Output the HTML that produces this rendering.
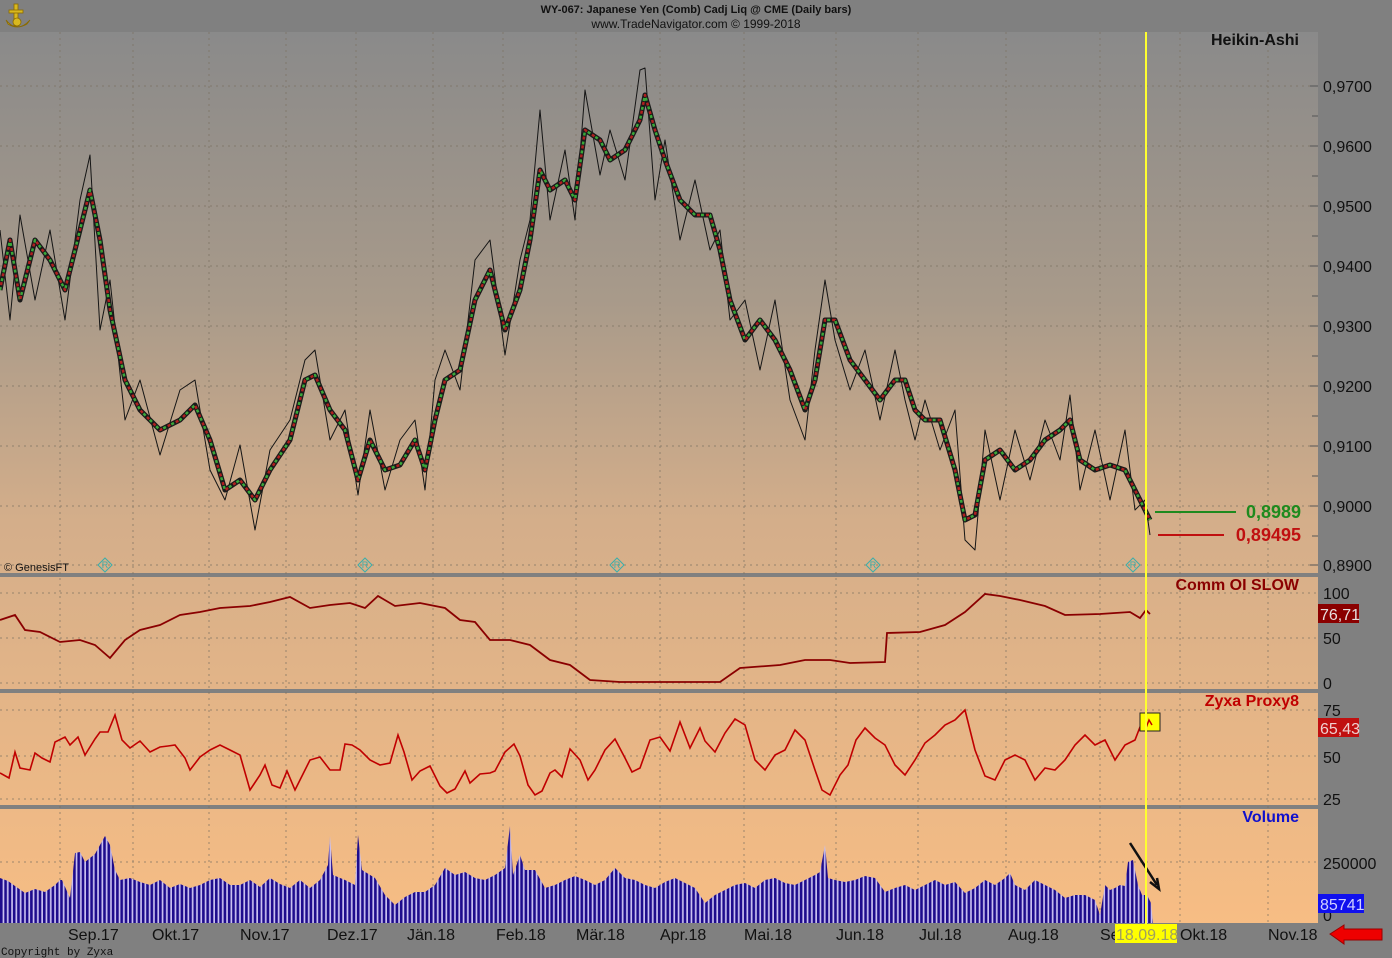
<!DOCTYPE html>
<html><head><meta charset="utf-8">
<style>
html,body{margin:0;padding:0;background:#808080;}
body{width:1392px;height:958px;overflow:hidden;position:relative;font-family:"Liberation Sans",sans-serif;}
svg{position:absolute;left:0;top:0;}
</style></head><body>
<svg width="1392" height="958" viewBox="0 0 1392 958" xmlns="http://www.w3.org/2000/svg" font-family="Liberation Sans, sans-serif">
<defs>
<linearGradient id="bg" x1="0" y1="0" x2="0" y2="1">
<stop offset="0" stop-color="#8a8a8a"/>
<stop offset="0.3" stop-color="#a89a8a"/>
<stop offset="0.55" stop-color="#d4ae8a"/>
<stop offset="1" stop-color="#f7bd84"/>
</linearGradient>
<pattern id="vol" x="0" y="0" width="4.3" height="10" patternUnits="userSpaceOnUse">
<rect x="0" y="0" width="4.3" height="10" fill="#c9bff0"/>
<rect x="0" y="0" width="2.6" height="10" fill="#1e0c8c"/>
</pattern>
</defs>
<rect x="0" y="0" width="1392" height="958" fill="#808080"/>
<rect x="0" y="32" width="1318" height="891" fill="url(#bg)"/>
<!-- header -->
<text x="696" y="13" font-size="11" font-weight="bold" text-anchor="middle" fill="#111">WY-067:  Japanese Yen (Comb) Cadj Liq @ CME  (Daily bars)</text>
<text x="696" y="28" font-size="12" text-anchor="middle" fill="#111">www.TradeNavigator.com © 1999-2018</text>
<g fill="#d8b820" stroke="#8a6a00" stroke-width="0.8">
<rect x="14" y="4" width="4" height="22"/><rect x="9" y="10" width="14" height="3"/>
<path d="M6 20 Q17 34 30 20 L27 24 Q17 30 8 24Z"/><circle cx="17" cy="22" r="4"/>
</g>
<!-- panel separators -->
<g fill="#808080">
<rect x="0" y="573" width="1318" height="4"/>
<rect x="0" y="689" width="1318" height="4"/>
<rect x="0" y="805" width="1318" height="4"/>
</g>
<!-- grid -->
<g stroke="#7a7060" stroke-width="1" stroke-dasharray="2,4" opacity="0.7">
<path d="M60 32V923M133 32V923M209 32V923M286 32V923M356 32V923M433 32V923M503 32V923M576 32V923M660 32V923M744 32V923M836 32V923M918 32V923M1006 32V923M1100 32V923M1180 32V923M1268 32V923"/>
<path d="M0 86H1318M0 146H1318M0 206H1318M0 266H1318M0 326H1318M0 386H1318M0 446H1318M0 506H1318M0 565H1318M0 593H1318M0 638H1318M0 683H1318M0 710H1318M0 756H1318M0 799H1318M0 862H1318"/>
</g>
<!-- right axis ticks -->
<g stroke="#555" stroke-width="1">
<path d="M1310 86H1318M1310 146H1318M1310 206H1318M1310 266H1318M1310 326H1318M1310 386H1318M1310 446H1318M1310 506H1318M1310 565H1318M1312 116H1318M1312 176H1318M1312 236H1318M1312 296H1318M1312 356H1318M1312 416H1318M1312 476H1318M1312 536H1318"/>
</g>
<g font-size="16" fill="#111">
<text x="1323" y="92">0,9700</text><text x="1323" y="152">0,9600</text><text x="1323" y="212">0,9500</text>
<text x="1323" y="272">0,9400</text><text x="1323" y="332">0,9300</text><text x="1323" y="392">0,9200</text>
<text x="1323" y="452">0,9100</text><text x="1323" y="512">0,9000</text><text x="1323" y="571">0,8900</text>
<text x="1323" y="599">100</text><text x="1323" y="644">50</text><text x="1323" y="689">0</text>
<text x="1323" y="716">75</text><text x="1323" y="763">50</text><text x="1323" y="805">25</text>
<text x="1323" y="869">250000</text><text x="1323" y="921">0</text>
</g>
<rect x="1318" y="604" width="41" height="19" fill="#8a0000"/>
<text x="1320" y="620" font-size="16" fill="#e8e0e0">76,71</text>
<rect x="1318" y="718" width="41" height="19" fill="#c01010"/>
<text x="1320" y="734" font-size="16" fill="#f0d0d0">65,43</text>
<rect x="1318" y="894" width="46" height="19" fill="#1010ee"/>
<text x="1320" y="910" font-size="16" fill="#d0d0ff">85741</text>
<!-- labels -->
<text x="1299" y="45" font-size="16" font-weight="bold" text-anchor="end" fill="#111">Heikin-Ashi</text>
<text x="1299" y="590" font-size="16" font-weight="bold" text-anchor="end" fill="#8a0000">Comm OI SLOW</text>
<text x="1299" y="706" font-size="16" font-weight="bold" text-anchor="end" fill="#c00000">Zyxa Proxy8</text>
<text x="1299" y="822" font-size="16" font-weight="bold" text-anchor="end" fill="#1010cc">Volume</text>
<text x="4" y="571" font-size="11" fill="#111">© GenesisFT</text>
<g fill="none" stroke="#3aaeaa" stroke-width="1">
<path d="M105 558l7 7-7 7-7-7z"/><path d="M365 558l7 7-7 7-7-7z"/><path d="M617 558l7 7-7 7-7-7z"/><path d="M873 558l7 7-7 7-7-7z"/><path d="M1133 558l7 7-7 7-7-7z"/>
</g>
<g font-size="9" fill="#3aaeaa" text-anchor="middle"><text x="105" y="568">R</text><text x="365" y="568">R</text><text x="617" y="568">R</text><text x="873" y="568">R</text><text x="1133" y="568">R</text></g>
<!-- price -->
<g fill="none" stroke-linejoin="round">
<polyline stroke="#151515" stroke-width="1" points="0,230 10,320 20,215 35,300 50,230 65,320 80,200 90,155 100,330 110,280 125,420 140,380 160,455 180,390 195,380 210,470 225,500 240,445 255,530 270,450 290,420 305,360 315,350 330,440 345,410 358,495 370,410 385,490 400,440 415,420 425,490 435,380 445,350 460,390 475,260 490,240 505,355 520,260 530,220 540,110 550,220 565,150 575,220 585,90 600,175 610,130 625,180 640,70 645,68 655,200 665,140 680,240 695,180 710,250 720,230 730,320 745,300 760,370 775,300 790,400 805,440 815,350 825,280 835,340 850,390 865,350 880,420 895,350 905,400 915,440 925,400 940,450 955,410 965,540 975,550 985,430 1000,500 1015,430 1030,480 1045,420 1060,460 1070,395 1080,490 1095,430 1110,500 1125,430 1135,510 1145,500 1150,535"/>
<polyline stroke="#1a1a1a" stroke-width="5" points="0,290 10,240 20,300 35,240 50,260 65,290 80,230 90,190 100,240 110,310 125,380 140,410 160,430 180,420 195,405 210,440 225,490 240,480 255,500 270,470 290,440 305,380 315,375 330,410 345,430 358,480 370,440 385,470 400,465 415,440 425,470 435,420 445,380 460,370 475,300 490,270 505,330 520,290 530,240 540,170 550,190 565,180 575,200 585,130 600,140 610,160 625,150 640,120 645,95 655,130 665,160 680,200 695,215 710,215 720,250 730,300 745,340 760,320 775,340 790,370 805,410 815,380 825,320 835,320 850,360 865,380 880,400 895,380 905,380 915,410 925,420 940,420 955,470 965,520 975,515 985,460 1000,450 1015,470 1030,460 1045,440 1060,430 1070,420 1080,460 1095,470 1110,465 1125,470 1135,490 1145,510 1150,520"/>
<polyline stroke="#3aa83a" stroke-width="2.5" stroke-dasharray="3,6" points="0,290 10,240 20,300 35,240 50,260 65,290 80,230 90,190 100,240 110,310 125,380 140,410 160,430 180,420 195,405 210,440 225,490 240,480 255,500 270,470 290,440 305,380 315,375 330,410 345,430 358,480 370,440 385,470 400,465 415,440 425,470 435,420 445,380 460,370 475,300 490,270 505,330 520,290 530,240 540,170 550,190 565,180 575,200 585,130 600,140 610,160 625,150 640,120 645,95 655,130 665,160 680,200 695,215 710,215 720,250 730,300 745,340 760,320 775,340 790,370 805,410 815,380 825,320 835,320 850,360 865,380 880,400 895,380 905,380 915,410 925,420 940,420 955,470 965,520 975,515 985,460 1000,450 1015,470 1030,460 1045,440 1060,430 1070,420 1080,460 1095,470 1110,465 1125,470 1135,490 1145,510 1150,520"/>
<polyline stroke="#b02020" stroke-width="2.5" stroke-dasharray="3,6" stroke-dashoffset="4" points="0,290 10,240 20,300 35,240 50,260 65,290 80,230 90,190 100,240 110,310 125,380 140,410 160,430 180,420 195,405 210,440 225,490 240,480 255,500 270,470 290,440 305,380 315,375 330,410 345,430 358,480 370,440 385,470 400,465 415,440 425,470 435,420 445,380 460,370 475,300 490,270 505,330 520,290 530,240 540,170 550,190 565,180 575,200 585,130 600,140 610,160 625,150 640,120 645,95 655,130 665,160 680,200 695,215 710,215 720,250 730,300 745,340 760,320 775,340 790,370 805,410 815,380 825,320 835,320 850,360 865,380 880,400 895,380 905,380 915,410 925,420 940,420 955,470 965,520 975,515 985,460 1000,450 1015,470 1030,460 1045,440 1060,430 1070,420 1080,460 1095,470 1110,465 1125,470 1135,490 1145,510 1150,520"/>
</g>
<path d="M1155 512H1236" stroke="#1e8a1e" stroke-width="2"/>
<path d="M1158 535H1224" stroke="#c01010" stroke-width="2"/>
<text x="1301" y="518" font-size="18" font-weight="bold" text-anchor="end" fill="#1e8a1e">0,8989</text>
<text x="1301" y="541" font-size="18" font-weight="bold" text-anchor="end" fill="#c01010">0,89495</text>
<!-- Comm OI -->
<polyline fill="none" stroke="#8a0000" stroke-width="1.8" points="0,620 15,615 25,630 40,632 60,642 80,640 95,645 110,658 125,640 140,630 160,625 180,615 200,612 220,608 250,606 270,602 290,597 310,608 330,605 350,603 365,608 378,596 395,606 420,603 445,608 460,620 475,622 490,640 510,640 530,645 550,660 570,665 590,680 620,682 720,682 740,668 780,665 805,660 830,660 850,663 885,662 887,633 920,632 945,625 965,612 985,594 1000,596 1020,600 1045,606 1065,615 1100,614 1130,612 1140,618 1146,610 1150,614"/>
<!-- Zyxa -->
<polyline fill="none" stroke="#c00000" stroke-width="1.6" points="0,773 9,778 15,752 20,768 30,770 35,753 42,758 50,762 55,742 65,737 70,745 78,737 85,755 95,739 100,732 108,732 115,715 122,740 130,748 140,741 150,752 160,747 168,746 175,745 185,758 190,770 200,757 210,750 220,745 230,750 240,755 250,790 260,775 265,765 272,785 280,788 287,771 295,790 300,780 310,760 320,757 330,770 340,770 345,744 352,745 360,750 370,760 380,765 390,763 398,735 404,752 412,780 420,771 430,766 440,786 447,793 455,789 465,771 470,783 480,774 490,773 495,771 505,752 514,744 520,756 528,785 535,795 542,791 550,773 555,770 562,777 570,749 580,760 588,780 595,770 605,750 615,739 625,758 632,772 640,768 650,740 660,737 670,751 680,722 690,748 700,728 705,741 715,752 725,733 735,719 745,725 755,760 765,770 775,755 785,750 795,730 805,740 815,770 822,790 830,795 840,775 848,765 856,740 865,728 875,738 885,745 895,765 905,775 915,760 925,743 935,735 945,725 955,720 965,710 975,750 985,776 995,780 1005,760 1015,755 1025,760 1035,780 1045,768 1055,770 1065,760 1075,745 1085,735 1095,745 1105,740 1115,760 1125,745 1135,740 1140,727 1146,725"/>
<rect x="1140" y="713" width="20" height="18" fill="#ffff00" stroke="#222" stroke-width="1"/>
<path d="M1146 728l3-8 3 5" stroke="#c00000" stroke-width="1.5" fill="none"/>
<!-- Volume -->
<polygon fill="url(#vol)" points="0,923 0,878 8,881 15,886 25,893 35,889 45,892 55,885 60,880 62,880 70,898 75,853 80,852 85,862 90,858 95,854 100,845 105,836 110,845 115,870 120,880 130,878 140,882 150,885 160,880 170,888 180,884 190,888 200,885 210,880 220,878 230,885 240,885 250,880 260,887 270,878 280,884 290,888 300,880 310,888 320,880 328,865 330,836 333,875 345,880 355,885 358,835 362,870 375,878 385,895 395,905 405,897 415,892 425,892 435,885 445,868 455,875 465,872 475,878 485,880 495,875 505,868 510,826 513,875 520,855 525,870 535,870 545,888 555,885 565,880 575,876 585,880 595,885 605,880 615,868 625,878 635,880 645,885 655,888 665,882 675,878 685,883 695,888 705,903 715,895 725,890 735,885 745,883 755,888 765,880 775,878 785,883 795,885 805,880 815,875 820,872 825,845 828,878 835,880 845,882 855,880 865,876 875,878 885,892 895,888 905,885 915,890 925,885 935,880 945,885 955,882 965,893 975,888 985,880 995,885 1005,878 1010,873 1015,885 1025,890 1035,880 1045,885 1055,890 1065,898 1075,895 1085,895 1095,900 1100,915 1105,885 1110,890 1115,888 1120,885 1125,886 1128,862 1133,860 1138,885 1142,895 1146,895 1148,897 1151,903 1153,923"/>
<path d="M1130 843L1157 885" stroke="#111" stroke-width="2.5"/>
<path d="M1150 882L1159 889 1157 878" stroke="#111" stroke-width="2.5" fill="none"/>
<!-- yellow cursor -->
<path d="M1146 32V925" stroke="#ffff30" stroke-width="2"/>
<!-- x axis -->
<g font-size="16" fill="#111">
<text x="68" y="940">Sep.17</text><text x="152" y="940">Okt.17</text><text x="240" y="940">Nov.17</text>
<text x="327" y="940">Dez.17</text><text x="407" y="940">Jän.18</text><text x="496" y="940">Feb.18</text>
<text x="576" y="940">Mär.18</text><text x="660" y="940">Apr.18</text><text x="744" y="940">Mai.18</text>
<text x="836" y="940">Jun.18</text><text x="919" y="940">Jul.18</text><text x="1008" y="940">Aug.18</text>
<text x="1100" y="940">Se</text><text x="1180" y="940">Okt.18</text><text x="1268" y="940">Nov.18</text>
</g>
<rect x="1115" y="924" width="62" height="19" fill="#ffff00"/>
<text x="1116" y="940" font-size="16" fill="#a0a060">18.09.18</text>
<path d="M1330 934L1344 925V929H1382V940H1344V944Z" fill="#ee0000" stroke="#900" stroke-width="1"/>
<text x="1" y="955" font-size="11" font-family="Liberation Mono, monospace" fill="#111">Copyright by Zyxa</text>
</svg>
</body></html>
